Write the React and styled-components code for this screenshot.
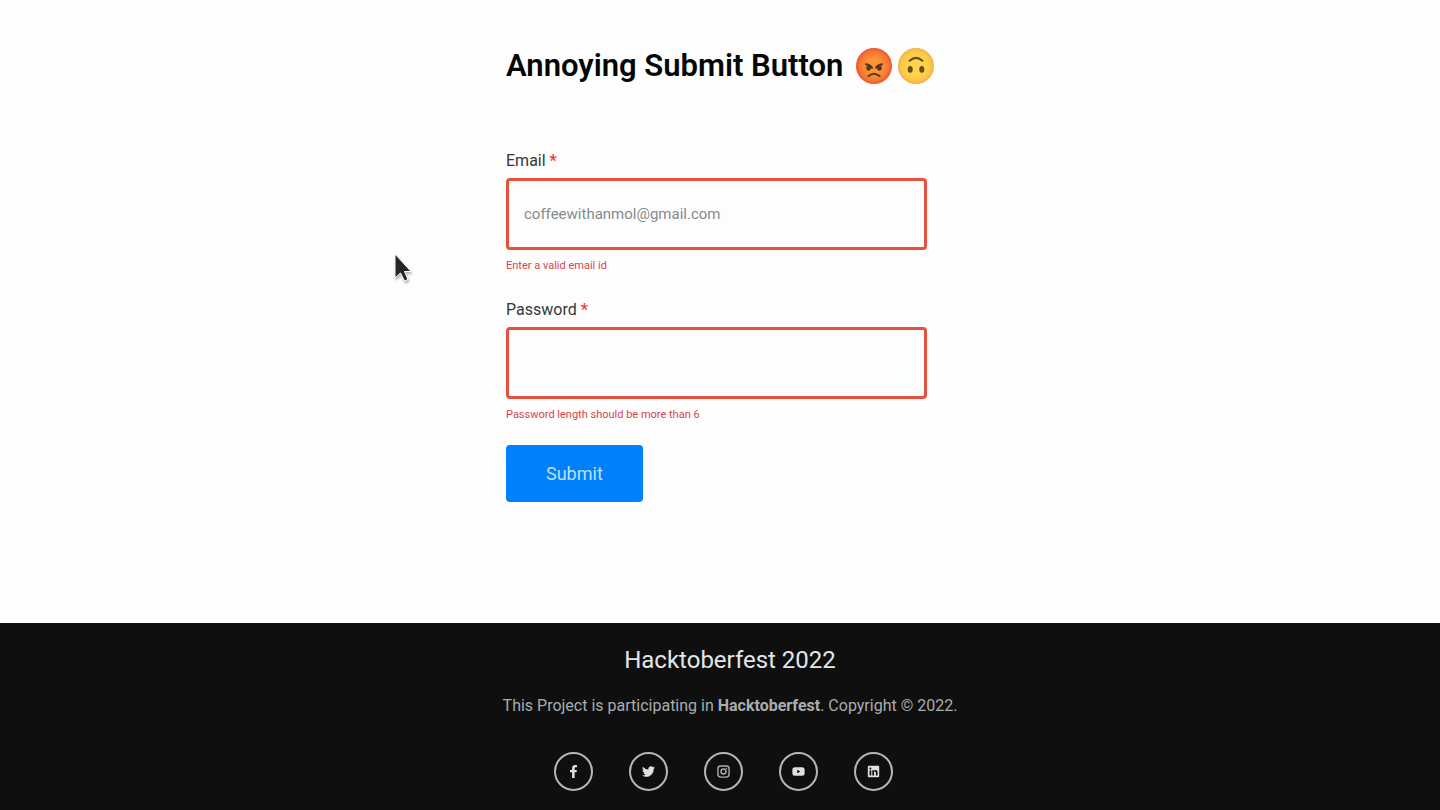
import React from "react";
import styled, { createGlobalStyle } from "styled-components";
import { FaFacebookF, FaTwitter, FaYoutube, FaLinkedin } from "react-icons/fa";

const GlobalStyle = createGlobalStyle`
  *, *::before, *::after { box-sizing: border-box; }
  body {
    margin: 0;
    background: #fdfdfd;
    font-family: Roboto, "Liberation Sans", sans-serif;
    font-size: 16px;
  }
`;

const Page = styled.div`
  display: flex;
  flex-direction: column;
  min-height: 100vh;
`;

const Main = styled.main`
  flex: 1;
  display: flex;
  justify-content: center;
  padding: 40px 16px;
`;

const Column = styled.div`
  position: relative;
  width: 100%;
  max-width: 428px;
`;

const Title = styled.h1`
  display: flex;
  align-items: center;
  gap: 6px;
  margin: 0 0 57px;
  color: #050808;
  font-size: 31px;
  font-weight: 600;
  line-height: 52px;
  white-space: nowrap;
`;

const TitleText = styled.span`
  margin-right: auto;
`;

const Emoji = styled.svg`
  flex: none;
  width: 36px;
  height: 36px;
`;

const Form = styled.form`
  display: flex;
  flex-direction: column;
  align-items: flex-start;
  padding-right: 7px;
`;

const Field = styled.div`
  display: flex;
  flex-direction: column;
  width: 100%;

  & + & {
    margin-top: 24px;
  }
`;

const Label = styled.label`
  margin-bottom: 5px;
  color: #303a3a;
  font-size: 16px;
  line-height: 24px;
`;

const Required = styled.span`
  color: #e8433a;
  font-weight: 700;
`;

const Input = styled.input`
  width: 100%;
  height: 72px;
  padding: 0 15px;
  border: 3px solid #e8513f;
  border-radius: 4px;
  outline: none;
  background: transparent;
  color: #303a3a;
  font-family: inherit;
  font-size: 15px;

  &::placeholder {
    color: #858b8b;
    opacity: 1;
  }
`;

const ErrorText = styled.p`
  margin: 8px 0 0;
  color: #d94350;
  font-size: 11px;
  line-height: 16px;
`;

const SubmitButton = styled.button`
  height: 57px;
  margin-top: 22px;
  padding: 0 40px;
  border: 0;
  border-radius: 4px;
  background: #0080fa;
  color: #bfe0fb;
  font-family: inherit;
  font-size: 18px;
`;

const Cursor = styled.svg`
  position: absolute;
  top: 212px;
  left: -114px;
  width: 24px;
  height: 36px;
  filter: drop-shadow(1px 2px 1px rgba(0, 0, 0, 0.3));
`;

const Footer = styled.footer`
  display: flex;
  flex-direction: column;
  align-items: center;
  padding: 18px 0 19px 20px;
  background: #0f0f0f;
  text-align: center;
`;

const FooterTitle = styled.h2`
  margin: 0 0 15px;
  color: #e4e6e6;
  font-size: 24px;
  font-weight: 400;
  line-height: 38px;
`;

const FooterText = styled.p`
  margin: 0 0 34px;
  color: #a8adad;
  font-size: 16px;
  line-height: 24px;
`;

const SocialList = styled.ul`
  display: flex;
  gap: 36px;
  margin: 0;
  padding: 0 13px 0 0;
  list-style: none;
`;

const SocialLink = styled.a`
  display: flex;
  align-items: center;
  justify-content: center;
  width: 39px;
  height: 39px;
  border: 2px solid #b4b7b7;
  border-radius: 50%;
  color: ${(p) => p.$color || "#dfe1e1"};
  font-size: 13px;
`;

function InstagramIcon() {
  return (
    <svg width="1em" height="1em" viewBox="0 0 14 14" fill="none" stroke="currentColor" strokeWidth="1.5" aria-hidden="true">
      <rect x="1" y="1" width="12" height="12" rx="3" />
      <circle cx="7" cy="7" r="2.7" />
      <circle cx="10.3" cy="3.7" r="0.7" fill="currentColor" stroke="none" />
    </svg>
  );
}

const socials = [
  { name: "Facebook", Icon: FaFacebookF },
  { name: "Twitter", Icon: FaTwitter },
  { name: "Instagram", Icon: InstagramIcon, color: "#a8adad" },
  { name: "YouTube", Icon: FaYoutube },
  { name: "LinkedIn", Icon: FaLinkedin },
];

function AngryFace() {
  return (
    <Emoji viewBox="0 0 36 36" role="img" aria-label="Angry face">
      <defs>
        <radialGradient id="angry" cx="50%" cy="50%" r="50%">
          <stop offset="0.4" stopColor="#fb9434" />
          <stop offset="0.8" stopColor="#f67832" />
          <stop offset="1" stopColor="#ea5431" />
        </radialGradient>
      </defs>
      <circle cx="18" cy="18" r="18" fill="url(#angry)" />
      <g fill="#5a351c">
        <ellipse cx="12.6" cy="20" rx="2.3" ry="2.8" />
        <ellipse cx="23.4" cy="20" rx="2.3" ry="2.8" />
      </g>
      <g fill="none" stroke="#5a351c" strokeWidth="2" strokeLinecap="round">
        <path d="M10 16.3 Q14 16.7 16 19.7" />
        <path d="M26 16.3 Q22 16.7 20 19.7" />
        <path d="M12.5 28 Q18 23.5 23.5 28" />
      </g>
    </Emoji>
  );
}

function UpsideDownFace() {
  return (
    <Emoji viewBox="0 0 36 36" role="img" aria-label="Upside-down face">
      <defs>
        <radialGradient id="upside" cx="50%" cy="50%" r="50%">
          <stop offset="0.5" stopColor="#fdd34e" />
          <stop offset="0.85" stopColor="#f9c646" />
          <stop offset="1" stopColor="#f2ad50" />
        </radialGradient>
      </defs>
      <circle cx="18" cy="18" r="18" fill="url(#upside)" />
      <path d="M11.5 12.8 Q18 7 24.5 12.8" fill="none" stroke="#6a4a1f" strokeWidth="2" strokeLinecap="round" />
      <ellipse cx="12.2" cy="21.4" rx="2.5" ry="3.3" fill="#6a4a1f" />
      <ellipse cx="23.8" cy="21.4" rx="2.5" ry="3.3" fill="#6a4a1f" />
    </Emoji>
  );
}

function TextField({ id, label, error, ...inputProps }) {
  return (
    <Field>
      <Label htmlFor={id}>
        {label} <Required>*</Required>
      </Label>
      <Input id={id} aria-describedby={`${id}-error`} aria-invalid="true" {...inputProps} />
      <ErrorText id={`${id}-error`}>{error}</ErrorText>
    </Field>
  );
}

export default function App() {
  return (
    <Page>
      <GlobalStyle />
      <Main>
        <Column>
          <Title>
            <TitleText>Annoying Submit Button</TitleText>
            <AngryFace />
            <UpsideDownFace />
          </Title>
          <Form noValidate onSubmit={(e) => e.preventDefault()}>
            <TextField
              id="email"
              type="email"
              label="Email"
              placeholder="coffeewithanmol@gmail.com"
              error="Enter a valid email id"
            />
            <TextField
              id="password"
              type="password"
              label="Password"
              error="Password length should be more than 6"
            />
            <SubmitButton type="submit">Submit</SubmitButton>
          </Form>
          <Cursor viewBox="0 0 24 36" aria-hidden="true">
            <path
              d="M3 2 V26 L8.5 21 L12.5 29 L16 27.5 L12.5 19.5 H19 Z"
              fill="#262626"
              stroke="#ffffff"
              strokeWidth="1"
            />
          </Cursor>
        </Column>
      </Main>
      <Footer>
        <FooterTitle>Hacktoberfest 2022</FooterTitle>
        <FooterText>
          This Project is participating in <strong>Hacktoberfest</strong>. Copyright © 2022.
        </FooterText>
        <SocialList>
          {socials.map(({ name, Icon, color }) => (
            <li key={name}>
              <SocialLink href="#" aria-label={name} $color={color}>
                <Icon />
              </SocialLink>
            </li>
          ))}
        </SocialList>
      </Footer>
    </Page>
  );
}
